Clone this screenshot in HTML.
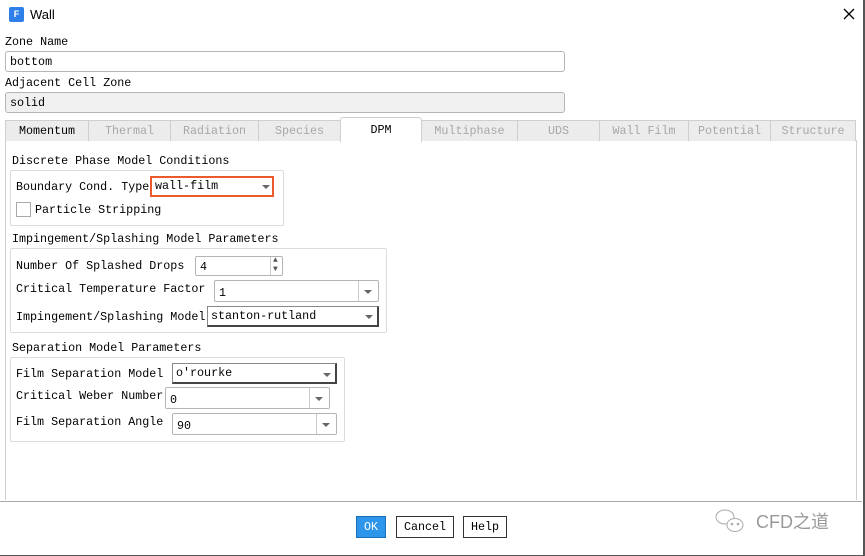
<!DOCTYPE html>
<html><head><style>
body{margin:0;width:865px;height:556px;background:#fff;font-family:"Liberation Mono","Noto Sans CJK SC",monospace;font-size:11.7px;color:#000;position:relative;overflow:hidden}
.a{position:absolute;white-space:nowrap}
.in{position:absolute;border:1px solid #b4b4b4;border-radius:3px;background:#fff;box-sizing:border-box;padding:0 4px;line-height:20px}
.tab{position:absolute;top:120px;height:21px;border:1px solid #cfcfcf;border-bottom:none;background:#ececec;color:#a8a8a8;text-align:center;line-height:21px;box-sizing:border-box}
.grp{position:absolute;border:1px solid #dcdcdc;border-radius:2px;background:#fff}
.cb{position:absolute;border:1px solid #888;background:#fff;box-sizing:border-box;height:20px}
.arr{position:absolute;width:0;height:0;border-left:4px solid transparent;border-right:4px solid transparent;border-top:4px solid #666}
.btn{position:absolute;top:516px;height:22px;border:1px solid #333;box-sizing:border-box;text-align:center;line-height:20px}
</style></head><body>
<div class="a" style="left:0;top:0;width:863px;height:555px;border-right:2px solid #555;border-bottom:1px solid #555"></div>
<div class="a" style="left:9px;top:7px;width:15px;height:15px;background:#2f7fe8;border-radius:2px;color:#fff;font:bold 9px 'Liberation Sans',sans-serif;text-align:center;line-height:15px">F</div>
<div class="a" style="left:30px;top:7px;font:13px 'Liberation Sans',sans-serif">Wall</div>
<svg class="a" style="left:843px;top:8px" width="12" height="12"><path d="M1 1L11 11M11 1L1 11" stroke="#000" stroke-width="1.3"/></svg>
<div class="a" style="left:5px;top:35px">Zone Name</div>
<div class="in" style="left:5px;top:51px;width:560px;height:21px">bottom</div>
<div class="a" style="left:5px;top:76px">Adjacent Cell Zone</div>
<div class="in" style="left:5px;top:92px;width:560px;height:21px;background:#f0f0f0">solid</div>
<div class="a" style="left:5px;top:140px;width:852px;height:360px;background:#fff;border-left:1px solid #cfcfcf;border-right:1px solid #cfcfcf;box-sizing:border-box"></div>
<div class="tab" style="left:5px;width:84px;color:#000">Momentum</div>
<div class="tab" style="left:88px;width:83px">Thermal</div>
<div class="tab" style="left:170px;width:89px">Radiation</div>
<div class="tab" style="left:258px;width:83px">Species</div>
<div class="tab" style="left:421px;width:97px">Multiphase</div>
<div class="tab" style="left:517px;width:83px">UDS</div>
<div class="tab" style="left:599px;width:90px">Wall Film</div>
<div class="tab" style="left:688px;width:83px">Potential</div>
<div class="tab" style="left:770px;width:86px">Structure</div>
<div class="tab" style="left:340px;top:117px;height:25px;width:82px;background:#fff;color:#000;border-radius:3px 3px 0 0;line-height:25px">DPM</div>
<div class="a" style="left:12px;top:154px">Discrete Phase Model Conditions</div>
<div class="grp" style="left:10px;top:170px;width:272px;height:54px"></div>
<div class="a" style="left:16px;top:180px">Boundary Cond. Type</div>
<div class="cb" style="left:150px;top:176px;width:124px;height:21px;border:2px solid #ea5a2a;line-height:17px;padding-left:3px">wall-film</div>
<div class="arr" style="left:262px;top:185px"></div>
<div class="a" style="left:16px;top:202px;width:13px;height:13px;border:1px solid #aaa"></div>
<div class="a" style="left:35px;top:203px">Particle Stripping</div>
<div class="a" style="left:12px;top:232px">Impingement/Splashing Model Parameters</div>
<div class="grp" style="left:10px;top:248px;width:375px;height:83px"></div>
<div class="a" style="left:16px;top:259px">Number Of Splashed Drops</div>
<div class="in" style="left:195px;top:256px;width:88px;height:20px;border-radius:2px">4</div>
<div class="a" style="left:270px;top:257px;width:1px;height:18px;background:#ccc"></div>
<div class="a" style="left:273px;top:256px;font-size:8px;line-height:9px;color:#555">▲<br>▼</div>
<div class="a" style="left:16px;top:282px">Critical Temperature Factor</div>
<div class="in" style="left:214px;top:280px;width:165px;height:22px;border-radius:2px;line-height:24px">1</div>
<div class="a" style="left:358px;top:281px;width:1px;height:20px;background:#ccc"></div>
<div class="arr" style="left:364px;top:290px"></div>
<div class="a" style="left:16px;top:310px">Impingement/Splashing Model</div>
<div class="cb" style="left:207px;top:306px;width:172px;height:21px;border-right:2px solid #444;border-bottom:2px solid #444;padding-left:3px;line-height:19px">stanton-rutland</div>
<div class="arr" style="left:365px;top:315px"></div>
<div class="a" style="left:12px;top:341px">Separation Model Parameters</div>
<div class="grp" style="left:10px;top:357px;width:333px;height:83px"></div>
<div class="a" style="left:16px;top:367px">Film Separation Model</div>
<div class="cb" style="left:172px;top:363px;width:165px;height:21px;border-right:2px solid #444;border-bottom:2px solid #444;padding-left:3px;line-height:19px">o'rourke</div>
<div class="arr" style="left:323px;top:373px"></div>
<div class="a" style="left:16px;top:389px">Critical Weber Number</div>
<div class="in" style="left:165px;top:387px;width:165px;height:22px;border-radius:2px;line-height:24px">0</div>
<div class="a" style="left:309px;top:388px;width:1px;height:20px;background:#ccc"></div>
<div class="arr" style="left:315px;top:397px"></div>
<div class="a" style="left:16px;top:415px">Film Separation Angle</div>
<div class="in" style="left:172px;top:413px;width:165px;height:22px;border-radius:2px;line-height:24px">90</div>
<div class="a" style="left:316px;top:414px;width:1px;height:20px;background:#ccc"></div>
<div class="arr" style="left:322px;top:423px"></div>
<div class="a" style="left:0;top:501px;width:862px;height:1px;background:#aaa"></div>
<div class="btn" style="left:356px;width:30px;background:#2d95ea;border-color:#1a6fb8;color:#fff">OK</div>
<div class="btn" style="left:396px;width:58px">Cancel</div>
<div class="btn" style="left:463px;width:44px">Help</div>
<svg class="a" style="left:714px;top:505px" width="34" height="34" viewBox="0 0 34 34" fill="none" stroke="#aaa" stroke-width="1"><ellipse cx="11" cy="12" rx="9" ry="7"/><ellipse cx="21" cy="20" rx="8" ry="6.5" fill="#fff"/><circle cx="18" cy="19" r="0.8" fill="#aaa"/><circle cx="24" cy="19" r="0.8" fill="#aaa"/></svg>
<div class="a" style="left:756px;top:508px;font:18px 'Liberation Sans','Noto Sans CJK SC',sans-serif;color:#999">CFD之道</div>
</body></html>
